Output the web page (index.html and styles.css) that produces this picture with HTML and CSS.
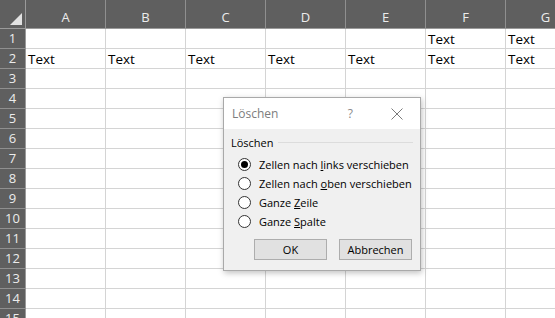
FILE: index.html
```html
<!DOCTYPE html>
<html lang="de">
<head>
    <meta charset="UTF-8">
    <meta name="viewport" content="width=device-width, initial-scale=1.0">
    <title>Löschen</title>
    <link rel="stylesheet" href="styles.css">
</head>
<body>

    <div class="sheet">
        <div class="corner"><span class="corner-mark"></span></div>
        <div class="col-head">A</div>
        <div class="col-head">B</div>
        <div class="col-head">C</div>
        <div class="col-head">D</div>
        <div class="col-head">E</div>
        <div class="col-head">F</div>
        <div class="col-head">G</div>

        <div class="row-head">1</div>
        <div class="cell"></div><div class="cell"></div><div class="cell"></div><div class="cell"></div><div class="cell"></div>
        <div class="cell">Text</div><div class="cell">Text</div>

        <div class="row-head">2</div>
        <div class="cell">Text</div><div class="cell">Text</div><div class="cell">Text</div><div class="cell">Text</div>
        <div class="cell">Text</div><div class="cell">Text</div><div class="cell">Text</div>
    </div>

    <div class="dialog">
        <div class="dialog-title">
            <span class="title-text">Löschen</span>
            <span class="help">?</span>
            <svg class="close" width="12" height="12" viewBox="0 0 12 12">
                <path d="M0.5 0.5 L11.5 11.5 M11.5 0.5 L0.5 11.5" stroke="#7a7a7a" stroke-width="1" fill="none"/>
            </svg>
        </div>
        <div class="dialog-body">
            <div class="group-label"><span>Löschen</span><span class="group-line"></span></div>
            <div class="options">
                <label class="option"><span class="radio checked"></span><span>Zellen nach <u>l</u>inks verschieben</span></label>
                <label class="option"><span class="radio"></span><span>Zellen nach <u>o</u>ben verschieben</span></label>
                <label class="option"><span class="radio"></span><span>Ganze <u>Z</u>eile</span></label>
                <label class="option"><span class="radio"></span><span>Ganze <u>S</u>palte</span></label>
            </div>
            <div class="buttons">
                <button class="btn">OK</button>
                <button class="btn">Abbrechen</button>
            </div>
        </div>
    </div>

    <script>
        // fill the empty rows 3 to 15
        const sheet = document.querySelector('.sheet');
        for (let r = 3; r <= 15; r++) {
            const head = document.createElement('div');
            head.className = 'row-head';
            head.textContent = r;
            sheet.appendChild(head);
            for (let c = 0; c < 7; c++) {
                const cell = document.createElement('div');
                cell.className = 'cell';
                sheet.appendChild(cell);
            }
        }
    </script>

</body>
</html>
```

FILE: styles.css
```css
* {
    box-sizing: border-box;
    margin: 0;
    padding: 0;
}
body {
    background-color: #fff;
    width: 555px;
    height: 318px;
    overflow: hidden;
    position: relative;
    font-family: 'Open Sans', sans-serif;
}
.sheet {
    display: grid;
    grid-template-columns: 26px repeat(7, 80px);
    grid-template-rows: 29px;
    grid-auto-rows: 20px;
}
.corner {
    background-color: #5f5f5f;
    border-right: 1px solid #9a9a9a;
    border-bottom: 1px solid #9a9a9a;
    display: flex;
    justify-content: flex-end;
    align-items: flex-end;
    padding: 0 3px 3px 0;
}
.corner-mark {
    width: 0;
    height: 0;
    border-left: 12px solid transparent;
    border-bottom: 12px solid #e2e2e2;
}
.col-head {
    background-color: #5f5f5f;
    color: #ececec;
    font-size: 13px;
    text-align: center;
    padding-top: 8px;
    border-right: 1px solid #8f8f8f;
    border-bottom: 1px solid #9a9a9a;
}
.row-head {
    background-color: #5f5f5f;
    color: #ececec;
    font-size: 13px;
    line-height: 19px;
    text-align: center;
    border-right: 1px solid #9a9a9a;
    border-bottom: 1px solid #8f8f8f;
}
.cell {
    border-right: 1px solid #d4d4d4;
    border-bottom: 1px solid #d4d4d4;
    font-size: 13.5px;
    line-height: 20px;
    padding-left: 2px;
    color: #000;
}
.dialog {
    position: absolute;
    left: 223px;
    top: 97px;
    width: 198px;
    height: 174px;
    background-color: #f0f0f0;
    border: 1px solid #a9a9a9;
    box-shadow: 1px 2px 6px rgba(0, 0, 0, 0.25);
    font-family: 'Open Sans', sans-serif;
    font-size: 11px;
    color: #000;
}
.dialog-title {
    background-color: #fff;
    height: 31px;
    display: flex;
    align-items: center;
    padding-left: 8px;
    color: #7d7d7d;
    font-size: 12px;
}
.title-text {
    flex: 1;
}
.help {
    color: #8a8a8a;
    font-size: 12px;
    margin-right: 38px;
}
.close {
    margin-right: 17px;
}
.dialog-body {
    padding: 5px 7px 0 7px;
}
.group-label {
    display: flex;
    align-items: center;
    gap: 4px;
    height: 16px;
}
.group-line {
    flex: 1;
    height: 1px;
    background-color: #dcdcdc;
}
.options {
    margin-top: 5px;
    padding-left: 7px;
    display: flex;
    flex-direction: column;
}
.option {
    display: flex;
    align-items: center;
    height: 19px;
}
.radio {
    width: 13px;
    height: 13px;
    border: 1px solid #333;
    border-radius: 50%;
    background-color: #fff;
    margin-right: 8px;
    display: flex;
    justify-content: center;
    align-items: center;
}
.radio.checked::after {
    content: '';
    width: 7px;
    height: 7px;
    border-radius: 50%;
    background-color: #000;
}
.buttons {
    display: flex;
    justify-content: flex-end;
    gap: 12px;
    margin-top: 8px;
    padding-right: 1px;
}
.btn {
    width: 73px;
    height: 21px;
    background-color: #e1e1e1;
    border: 1px solid #adadad;
    font-family: 'Open Sans', sans-serif;
    font-size: 11px;
    color: #000;
}
```
